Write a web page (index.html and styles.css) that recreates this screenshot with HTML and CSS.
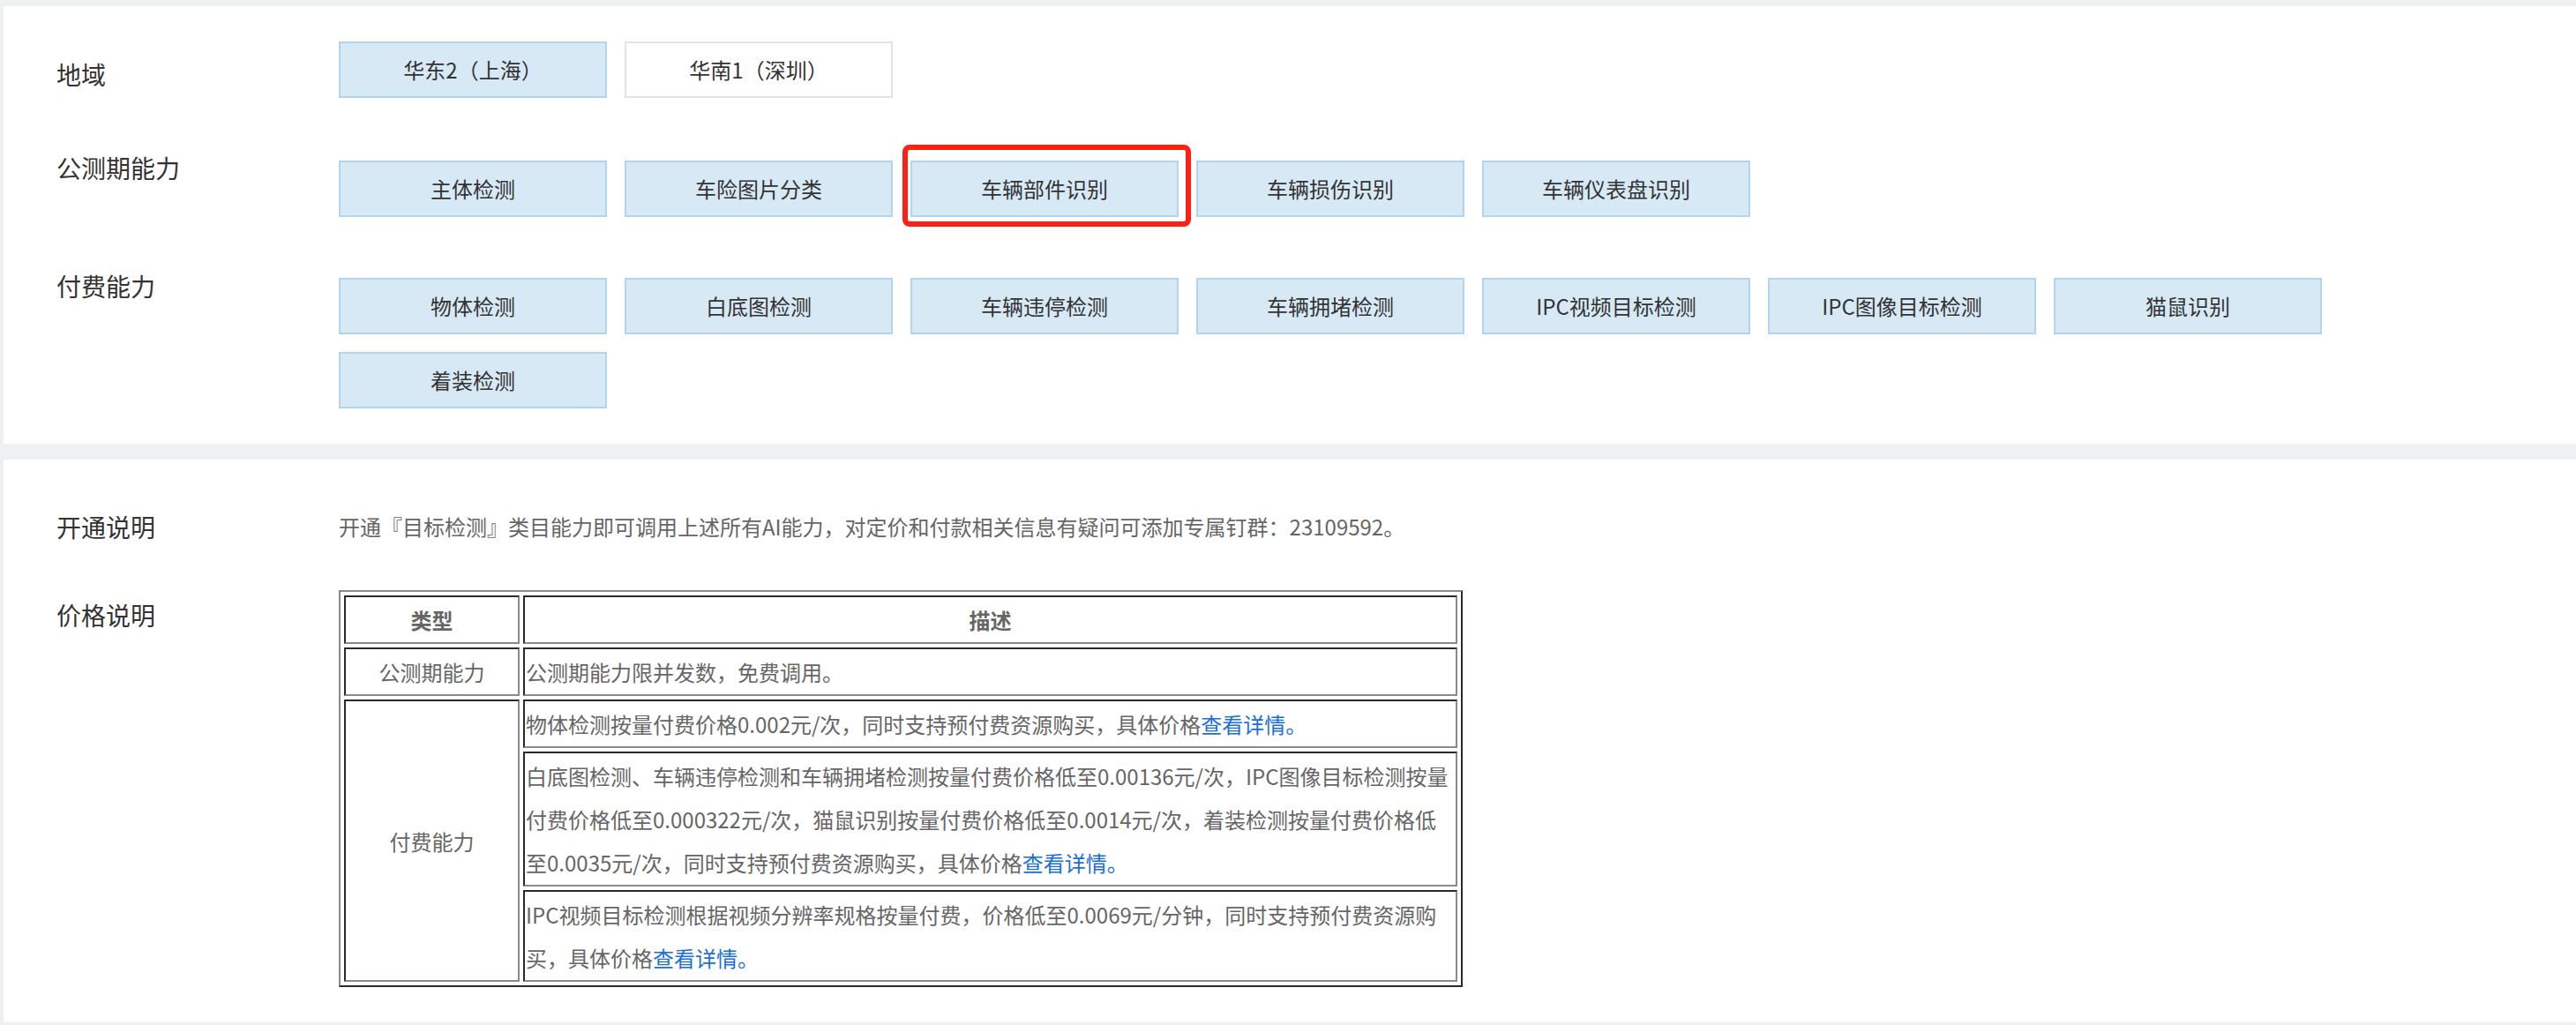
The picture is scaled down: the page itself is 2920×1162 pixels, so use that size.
FILE: index.html
```html
<!DOCTYPE html>
<html lang="zh-CN">
<head>
<meta charset="utf-8">
<title>目标检测</title>
<link rel="stylesheet" href="styles.css">
</head>
<body>
<div class="page">
  <section class="panel panel-abilities">
    <div class="row row-region">
      <div class="label">地域</div>
      <div class="options">
        <span class="opt opt-active">华东2（上海）</span>
        <span class="opt">华南1（深圳）</span>
      </div>
    </div>
    <div class="row row-public">
      <div class="label">公测期能力</div>
      <div class="options">
        <span class="opt opt-active">主体检测</span>
        <span class="opt opt-active">车险图片分类</span>
        <span class="opt opt-active opt-marked">车辆部件识别</span>
        <span class="opt opt-active">车辆损伤识别</span>
        <span class="opt opt-active">车辆仪表盘识别</span>
      </div>
    </div>
    <div class="row row-paid">
      <div class="label">付费能力</div>
      <div class="options">
        <span class="opt opt-active">物体检测</span>
        <span class="opt opt-active">白底图检测</span>
        <span class="opt opt-active">车辆违停检测</span>
        <span class="opt opt-active">车辆拥堵检测</span>
        <span class="opt opt-active">IPC视频目标检测</span>
        <span class="opt opt-active">IPC图像目标检测</span>
        <span class="opt opt-active">猫鼠识别</span>
        <span class="opt opt-active">着装检测</span>
      </div>
    </div>
  </section>

  <section class="panel panel-info">
    <div class="row row-open">
      <div class="label">开通说明</div>
      <p class="desc">开通『目标检测』类目能力即可调用上述所有AI能力，对定价和付款相关信息有疑问可添加专属钉群：23109592。</p>
    </div>
    <div class="row row-price">
      <div class="label label-price">价格说明</div>
      <table class="price-table">
        <colgroup>
          <col class="col-type">
          <col class="col-desc">
        </colgroup>
        <tr>
          <th>类型</th>
          <th>描述</th>
        </tr>
        <tr>
          <td class="type">公测期能力</td>
          <td>公测期能力限并发数，免费调用。</td>
        </tr>
        <tr>
          <td class="type" rowspan="3">付费能力</td>
          <td>物体检测按量付费价格0.002元/次，同时支持预付费资源购买，具体价格<a class="more" href="#">查看详情。</a></td>
        </tr>
        <tr>
          <td>白底图检测、车辆违停检测和车辆拥堵检测按量付费价格低至0.00136元/次，IPC图像目标检测按量付费价格低至0.000322元/次，猫鼠识别按量付费价格低至0.0014元/次，着装检测按量付费价格低至0.0035元/次，同时支持预付费资源购买，具体价格<a class="more" href="#">查看详情。</a></td>
        </tr>
        <tr>
          <td>IPC视频目标检测根据视频分辨率规格按量付费，价格低至0.0069元/分钟，同时支持预付费资源购买，具体价格<a class="more" href="#">查看详情。</a></td>
        </tr>
      </table>
    </div>
  </section>
</div>
</body>
</html>
```

FILE: styles.css
```css
* {
  box-sizing: border-box;
}

html, body {
  margin: 0;
  padding: 0;
}

body {
  background: #eef0f2;
  font-family: "Noto Sans CJK SC", "Noto Sans", sans-serif;
  color: #333;
}

.page {
  padding-top: 7px;
  padding-left: 4px;
}

.panel {
  background: #fff;
  padding-left: 60px;
}

.panel-abilities {
  padding-top: 40px;
  padding-bottom: 40px;
}

.panel-info {
  margin-top: 18px;
  padding-top: 56px;
  padding-bottom: 40px;
}

.row {
  display: flex;
  align-items: flex-start;
}

.label {
  flex: 0 0 320px;
  font-size: 28px;
  line-height: 40px;
  color: #333;
}

.options {
  flex: 1 1 auto;
  display: flex;
  flex-wrap: wrap;
  gap: 20px;
}

.opt {
  position: relative;
  display: block;
  width: 304px;
  height: 64px;
  border: 2px solid #e3e3e3;
  background: #fff;
  font-size: 24px;
  line-height: 60px;
  text-align: center;
  color: #333;
  white-space: nowrap;
}

.opt-active {
  background: #d8e9f6;
  border-color: #b3d4ef;
}

.opt-marked::after {
  content: "";
  position: absolute;
  left: -11px;
  right: -16px;
  top: -20px;
  bottom: -13px;
  border: 6px solid #fd2014;
  border-radius: 8px;
}

.row-region .label {
  margin-top: 17px;
}

.row-public {
  margin-top: 59px;
}

.row-public .options {
  margin-top: 12px;
}

.row-paid {
  margin-top: 58px;
}

.row-paid .options {
  margin-top: 11px;
}

.desc {
  margin: 0;
  font-size: 24px;
  line-height: 40px;
  color: #666;
}

.row-price {
  margin-top: 52px;
}

.label-price {
  margin-top: 8px;
}

.price-table {
  width: 1274px;
  table-layout: fixed;
  border-style: solid;
  border-width: 2px;
  border-color: #8a8a8a #2a2a2a #2a2a2a #8a8a8a;
  border-spacing: 4px;
  font-size: 24px;
  line-height: 49px;
  color: #666;
}

.col-type {
  width: 199px;
}

.price-table th,
.price-table td {
  border-style: solid;
  border-width: 2px;
  border-color: #2a2a2a #8a8a8a #8a8a8a #2a2a2a;
  padding: 1px;
  vertical-align: middle;
  text-align: left;
}

.price-table th {
  text-align: center;
  font-weight: bold;
  color: #666;
}

.price-table td.type {
  text-align: center;
}

.more {
  color: #1a6fd8;
  text-decoration: none;
}
```
